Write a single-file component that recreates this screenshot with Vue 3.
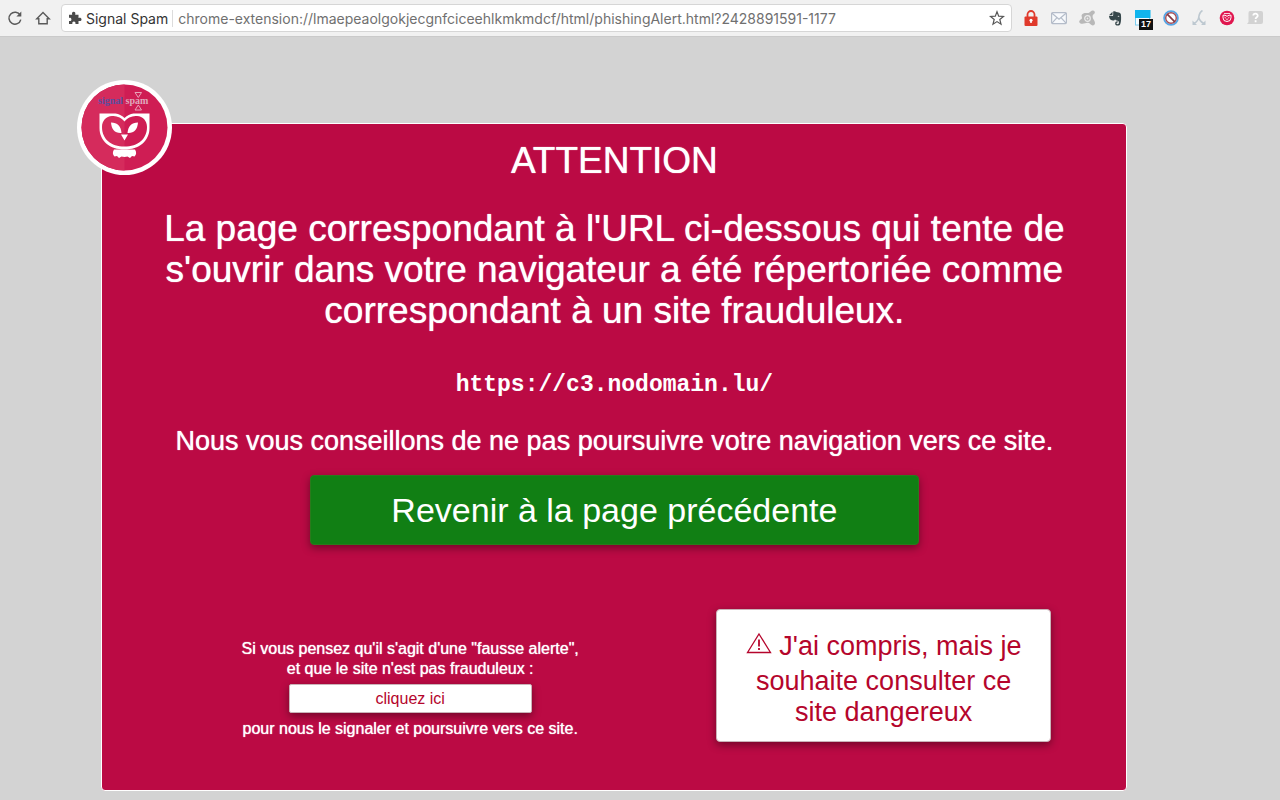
<template>
  <header class="toolbar">
    <button class="icon-btn" type="button" aria-label="Actualiser">
      <svg viewBox="0 0 16 16" fill="none" stroke="#5a5a5a" stroke-width="1.5">
        <path d="M13.2 5.2A6 6 0 1 0 13.8 9.6" />
        <path d="M14.3 1.6v4.900H9.400z" fill="#5a5a5a" stroke="none" />
      </svg>
    </button>
    <button class="icon-btn" type="button" aria-label="Accueil">
      <svg viewBox="0 0 16 16" fill="none" stroke="#5a5a5a" stroke-width="1.4">
        <path d="M1.800 8.700 8 2.600l6.200 6.100h-2v5.100H3.800V8.700z" />
      </svg>
    </button>

    <div class="omnibox">
      <svg class="puzzle" viewBox="0 0 14 14" fill="#4a4a4a">
        <path d="M1 3.8h3.2c-.5-1.700.1-3 1.500-3s2 1.300 1.500 3h3.300v3.100c1.700-.5 3 .1 3 1.500s-1.300 2-3 1.500V13H7.400c.5-1.600-.3-2.500-1.500-2.500S3.900 11.400 4.400 13H1V9.900c1.600.4 2.400-.4 2.400-1.500S2.500 6.500 1 6.900z" />
      </svg>
      <label class="origin" for="address">Signal Spam</label>
      <input id="address" v-model="address" class="address" type="text" spellcheck="false" />
      <button class="icon-btn" type="button" aria-label="Ajouter aux favoris">
        <svg viewBox="0 0 16 16" fill="none" stroke="#555" stroke-width="1.2">
          <path d="M8 1.700 9.700 6.200l4.800.3-3.700 3 1.200 4.700L8 11.600l-4 2.600 1.200-4.700-3.700-3 4.800-.3z" />
        </svg>
      </button>
    </div>

    <nav class="extensions" aria-label="Extensions">
      <button class="icon-btn" type="button" aria-label="Cadenas">
        <svg viewBox="0 0 16 16">
          <path d="M4.500 8V4.500a3.500 3.500 0 0 1 7 0V8" fill="none" stroke="#e03a2c" stroke-width="1.800" />
          <rect x="1.500" y="6.500" width="13" height="9.500" rx="1" fill="#e03a2c" />
          <path d="M8 9.500v3.500" stroke="#fff" stroke-width="1.500" />
          <circle cx="8" cy="10.300" r="1.500" fill="#fff" />
        </svg>
      </button>
      <button class="icon-btn" type="button" aria-label="Courrier">
        <svg viewBox="0 0 16 16" fill="#f7f9fc" stroke="#b4bcc9" stroke-width="1.2">
          <rect x=".6" y="2.600" width="14.800" height="11" rx="1" />
          <path d="M1 3.200 8 9.300l7-6.100M1 13.200l5-5.500M15 13.200l-5-5.500" fill="none" />
        </svg>
      </button>
      <button class="icon-btn" type="button" aria-label="Avast">
        <svg viewBox="0 0 16 16">
          <path d="M3 4.500C5.500 2 8 3.500 9.500 3c2-.7 2.500-2.700 4.500-2.500s2.500 2.500 1 3.500-1.500 2-1.300 3.500c.2 1.700 2.300 3.300 2.300 5.500 0 2-2 3-3.500 2-1.700-1-1.500-2-3.500-2.300-2-.2-3.500 1-5.500 1-2.500 0-4-1.500-3-3S3 9.500 3 8 2 6 3 4.500z" fill="#b8b8b8" />
          <circle cx="8.500" cy="8.500" r="2.800" fill="none" stroke="#ededed" stroke-width="1.200" />
          <circle cx="8.500" cy="8.500" r=".9" fill="#ededed" />
        </svg>
      </button>
      <button class="icon-btn" type="button" aria-label="Evernote">
        <svg viewBox="0 0 16 16" fill="#36474b">
          <path d="M2 5.200 5.500 1.800v2.600c0 .5-.3.800-.8.800z" />
          <path d="M6.200 1.500c1.200-.5 2.300-.2 3 .6l2.600.3c1.200.2 1.900.9 2.100 2.200.4 3 .3 7.400-.6 9.400-.4 1-1.200 1.600-2.600 1.600-1.800 0-2.500-.9-2.500-2.200 0-1.400.9-2.200 2.500-2.100v1.300c-.8 0-1.200.2-1.200.8 0 .5.400.8 1.100.8 1 0 1.300-.5 1.300-1.600 0-1.300-.7-2-2.400-2.100-.7 0-1.200-.5-1.400-1.200-.4.900-1.100 1.400-2.300 1.200C3 10.100 2.200 8.200 2 6h3c.9 0 1.200-.4 1.200-1.200zM10.500 6.300c.2.400 1.600.5 1.900.2-.2-.8-1.500-1.100-1.900-.2z" />
        </svg>
      </button>
      <button class="icon-btn" type="button" aria-label="Agenda, 17">
        <svg viewBox="0 0 16 16">
          <rect x=".5" y="1" width="14" height="14" fill="#f5fbfe" stroke="#7bcdf0" />
          <rect width="15.500" height="8" fill="#10b5ee" />
        </svg>
        <span class="count">17</span>
      </button>
      <button class="icon-btn" type="button" aria-label="Bloqueur">
        <svg viewBox="0 0 16 16">
          <circle cx="8" cy="8" r="6.900" fill="#fff" stroke="#55a5e5" stroke-width="1.800" />
          <circle cx="8" cy="8" r="5.300" fill="none" stroke="#a34d57" stroke-width="1.400" />
          <path d="m4.200 4.200 7.600 7.600" stroke="#813844" stroke-width="1.700" />
        </svg>
      </button>
      <button class="icon-btn" type="button" aria-label="Redirection">
        <svg viewBox="0 0 16 16" fill="none" stroke="#bdc8d0" stroke-width="1.600">
          <path d="M11.500.5C8.800 2 8 5 7.700 7.500 7.300 10.300 5.500 12 3 13.500M7.800 7.500c.6 3 2.400 4.500 5 6" />
          <path d="M1.500 10.500v4.500h4.500zM14.500 10.500v4.500H10z" fill="#bdc8d0" stroke="none" />
        </svg>
      </button>
      <button class="icon-btn" type="button" aria-label="Signal Spam">
        <svg viewBox="0 0 16 16">
          <circle cx="8" cy="8" r="7.300" fill="#e0174f" />
          <path d="M4 5.200h2L8 6.300l2-1.100h2v2.600a4 3.700 0 0 1-8 0z" fill="none" stroke="#fff" stroke-width="1" />
          <path d="m5.500 7.200 1.800 1.200M10.500 7.200 8.700 8.400M7.300 9.500h1.400M5 3.500h6" stroke="#fff" stroke-width=".8" />
        </svg>
      </button>
      <button class="icon-btn" type="button" aria-label="Aide">
        <svg viewBox="0 0 16 16">
          <path d="M3 1h11q2 0 2 2v9q0 2-2 2H0l1.500-2V3q0-2 1.500-2z" fill="#d2d2d2" />
          <path d="M6.300 5.500c.2-2.600 4.700-2.300 4.400.3-.2 1.600-2.100 1.400-2.100 3.300M8.600 10.300v1.900" fill="none" stroke="#fff" stroke-width="1.800" />
        </svg>
      </button>
    </nav>
  </header>

  <main class="alert">
    <div class="badge">
      <svg viewBox="0 0 96 96" role="img" aria-label="Signal Spam">
        <circle cx="47.500" cy="48.500" r="47.500" fill="#fff" />
        <circle cx="47.500" cy="48.500" r="43" fill="#cf1d54" />
        <path d="M47.500 5.500a43 43 0 0 0 0 86z" fill="#d52b5c" />
        <text class="brand" x="21" y="25"><tspan fill="#5b4ea0">signal</tspan><tspan fill="#dfa9bd"> spam</tspan></text>
        <g fill="none" stroke="#e9a4b9" stroke-width="1">
          <path d="M58 13.500h6.500l-3.200 5zM58 31h6.500l-3.200-5z" />
        </g>
        <!-- owl head -->
        <path
          d="M22.500 34.500h16q5 .5 9 4.500 4-4 9-4.500h16V49C72.500 62 62 70.500 47.500 70.500S22.500 62 22.500 49z
             M47.500 42.500C43 37.500 39 37 35 37 29 37 25 42 25 48c0 12 9 19.500 22.500 19.500S70 60 70 48c0-6-4-11-10-11-4 0-8 .5-12.500 5.500z"
          fill="#fff"
          fill-rule="evenodd"
        />
        <path d="M34 43.500c6.500 0 10 4 10.500 10.500-6.500.5-10-3.500-10.500-10.500zM61 43.500c-6.500 0-10 4-10.500 10.500 6.500.5 10-3.500 10.500-10.500zM44 55.500h7l-3.500 6z" fill="#fff" />
        <path d="M37 70.500h21q2.500 4-.5 7l-2.500-.5-2 2-2.500-1.500-3 .5-3-.5-2.500 1.500-2-2-2.500.5q-3-3-.5-7z" fill="#fff" />
      </svg>
    </div>

    <h1 class="title">ATTENTION</h1>
    <p class="message">
      La page correspondant à l'URL ci-dessous qui tente de s'ouvrir dans votre navigateur a été
      répertoriée comme correspondant à un site frauduleux.
    </p>
    <p class="site">{{ site }}</p>
    <p class="advice">Nous vous conseillons de ne pas poursuivre votre navigation vers ce site.</p>
    <button class="btn btn-back" type="button">Revenir à la page précédente</button>

    <div class="choices">
      <div class="report">
        <p>Si vous pensez qu'il s'agit d'une "fausse alerte",<br />et que le site n'est pas frauduleux :</p>
        <button class="btn btn-report" type="button">cliquez ici</button>
        <p>pour nous le signaler et poursuivre vers ce site.</p>
      </div>
      <button class="btn btn-continue" type="button">
        <svg class="warning" viewBox="0 0 26 22" fill="none" stroke="#b5052c" stroke-width="1.300">
          <path d="M13 2 24.500 20.500h-23z" />
          <path d="M13 7.500v7M13 16v2" stroke-width="1.800" />
        </svg>
        J'ai compris, mais je souhaite consulter ce site dangereux
      </button>
    </div>
  </main>
</template>

<script setup>
import { ref } from 'vue'

const site = 'https://c3.nodomain.lu/'
const address = ref(
  'chrome-extension://lmaepeaolgokjecgnfciceehlkmkmdcf/html/phishingAlert.html?2428891591-1177'
)
</script>

<style>
body {
  margin: 0;
  background: #d3d3d3;
}
</style>

<style scoped>
.toolbar {
  display: flex;
  align-items: center;
  gap: 12px;
  height: 36px;
  padding: 0 17px 0 7px;
  background: #f1f1f1;
  border-bottom: 1px solid #cacaca;
  font-family: Inter, sans-serif;
  font-size: 14px;
}

.icon-btn {
  position: relative;
  flex: none;
  width: 16px;
  height: 16px;
  padding: 0;
  border: 0;
  background: none;
}

.icon-btn svg {
  display: block;
  width: 16px;
  height: 16px;
}

.omnibox {
  flex: 1;
  display: flex;
  align-items: center;
  height: 28px;
  margin-left: -2px;
  margin-right: -1px;
  padding: 0 6px;
  border: 1px solid #d6d6d6;
  border-radius: 4px;
  background: #fff;
  box-sizing: border-box;
}

.puzzle {
  width: 14px;
  height: 14px;
  margin-right: 4px;
}

.origin {
  padding-right: 4px;
  border-right: 1px solid #dcdcdc;
  color: #333;
}

.address {
  flex: 1;
  min-width: 0;
  padding: 0 5px;
  border: 0;
  outline: 0;
  background: none;
  color: #707070;
  font: inherit;
}

.extensions {
  display: flex;
  gap: 12px;
}

.count {
  position: absolute;
  left: 4px;
  top: 9px;
  padding: 0 2px;
  background: #111;
  color: #fff;
  font-size: 9px;
  font-weight: 700;
  line-height: 11px;
}

.alert {
  position: relative;
  width: calc(80% + 2px);
  margin: 86px 0 9px calc(8% - 1px);
  padding: 16px 4px 48px;
  border: 1px solid #fff;
  border-radius: 4px;
  background: #bb0a44;
  color: #fff;
  box-sizing: border-box;
  font-family: "Liberation Sans", Arial, sans-serif;
  text-align: center;
}

.badge {
  position: absolute;
  left: -25px;
  top: -45px;
}

.badge svg {
  display: block;
  width: 96px;
  height: 96px;
}

.brand {
  font-family: "Liberation Serif", serif;
  font-size: 10px;
  font-weight: 700;
}

p,
h1 {
  margin: 0;
}

.title,
.message {
  font-size: 37px;
  font-weight: 400;
  line-height: 41px;
  text-shadow: 0 0 1px #fff;
}

.message {
  margin-top: 27px;
  padding: 0 48px;
}

.site {
  margin-top: 40px;
  font-family: "Liberation Mono", monospace;
  font-size: 23px;
  font-weight: 700;
  line-height: 28px;
}

.advice {
  margin-top: 26px;
  font-size: 27px;
  line-height: 32px;
  text-shadow: 0 0 1px #fff;
}

.btn {
  border: 1px solid #c9b4b9;
  border-radius: 4px;
  background: #fff;
  box-shadow: 0 3px 8px rgba(0, 0, 0, 0.4);
  color: #b5052c;
  font-family: inherit;
}

.btn-back {
  width: 60%;
  margin-top: 18px;
  padding: 14px;
  border-color: #2b7a1c;
  background: #117f14;
  color: #fff;
  font-size: 34px;
  line-height: 40px;
}

.choices {
  display: grid;
  grid-template-columns: 60% 33%;
  margin-top: 64px;
}

.report {
  align-self: end;
  padding: 0 2px 3px 0;
  font-size: 16px;
  line-height: 20px;
  text-shadow: 0 0 1px #fff;
}

.btn-report {
  width: 40%;
  margin: 5px 0 6px;
  padding: 4px;
  border-radius: 2px;
  font-size: 16px;
  line-height: 19px;
}

.btn-continue {
  padding: 21px 24px 13px;
  font-size: 27px;
  line-height: 31px;
}

.warning {
  width: 26px;
  height: 22px;
  padding-bottom: 12px;
  vertical-align: -11px;
}
</style>
